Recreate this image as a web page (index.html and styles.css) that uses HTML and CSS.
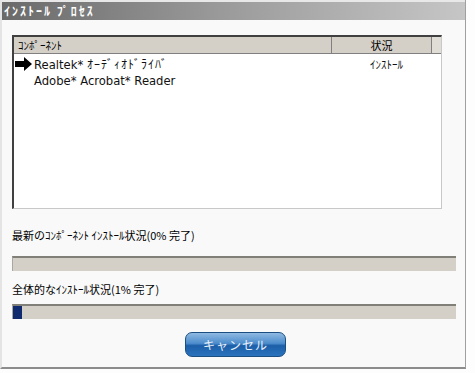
FILE: index.html
```html
<!DOCTYPE html>
<html>
<head>
<meta charset="utf-8">
<link rel="stylesheet" href="styles.css">
</head>
<body>
<div class="win">
  <div class="title">ｲﾝｽﾄｰﾙ ﾌﾟﾛｾｽ</div>
  <div class="content">
    <div class="list">
      <div class="head">
        <div class="hcol1">ｺﾝﾎﾟｰﾈﾝﾄ</div>
        <div class="hcol2">状況</div>
        <div class="hcol3"></div>
      </div>
      <div class="rows">
        <div class="row">
          <svg class="arrow" width="18" height="14" viewBox="0 0 18 14"><path d="M0 4 H9 V0 L17 7 L9 14 V10 H0 Z" fill="#000"/></svg>
          <span class="name">Realtek* <span class="kana">ｵｰﾃﾞｨｵﾄﾞﾗｲﾊﾞ</span></span>
          <span class="stat">ｲﾝｽﾄｰﾙ</span>
        </div>
        <div class="row">
          <span class="arrow-space"></span>
          <span class="name">Adobe* Acrobat* Reader</span>
        </div>
      </div>
    </div>
    <div class="label l1">最新のｺﾝﾎﾟｰﾈﾝﾄ ｲﾝｽﾄｰﾙ状況(0% 完了)</div>
    <div class="bar b1"></div>
    <div class="label l2">全体的なｲﾝｽﾄｰﾙ状況(1% 完了)</div>
    <div class="bar b2"><div class="fill" style="width:9px"></div></div>
    <div class="btnrow"><div class="btn">キャンセル</div></div>
  </div>
</div>
</body>
</html>
```
FILE: styles.css
```css
html, body { margin: 0; padding: 0; background: #fdfdfd; }
body { width: 475px; height: 373px; overflow: hidden; font-family: "Noto Sans CJK JP", "DejaVu Sans", sans-serif; }
.win {
  width: 466px; height: 369px;
  border-right: 1px solid #a0a0a0;
  border-bottom: 2px solid #8c8c8c;
  border-left: 2px solid #e4e4e4;
  box-sizing: border-box;
  background: #f9f9f9;
}
.title {
  height: 20px;
  border-top: 2px solid #e8e8e8;
  box-sizing: border-box;
  background: linear-gradient(to right, #6a6a6a, #989898 45%, #c6c6c6);
  color: #fff;
  font-size: 12px;
  font-weight: bold;
  line-height: 17px;
  padding-left: 2px;
  letter-spacing: 2px;
}
.content { padding: 15px 8px 0 10px; }
.list {
  width: 430px; height: 174px; box-sizing: border-box;
  border-top: 2px solid #404040;
  border-left: 2px solid #404040;
  border-right: 1px solid #c8c8c8;
  border-bottom: 1px solid #c8c8c8;
  background: #fff;
}
.head { display: flex; height: 16px; background: #d4d0c8; font-size: 11px; line-height: 16px; color: #000; border-bottom: 1px solid #808080; }
.hcol1 { width: 318px; padding-left: 4px; border-right: 1px solid #808080; box-sizing: border-box; }
.hcol2 { width: 100px; text-align: center; border-right: 1px solid #808080; box-sizing: border-box; }
.hcol3 { flex: 1; background: #e0ddd6; }
.rows { padding-top: 1px; }
.row { display: flex; align-items: center; height: 17px; font-size: 11.6px; font-family: "DejaVu Sans", "Noto Sans CJK JP", sans-serif; color: #111; }
.arrow { width: 18px; margin-left: 1px; }
.arrow-space { width: 19px; }
.name { width: 336px; padding-left: 1px; }
.kana { font-family: "Noto Sans CJK JP", sans-serif; font-size: 12px; letter-spacing: 1px; }
.stat { font-size: 11px; font-family: "Noto Sans CJK JP", sans-serif; }
.label { font-size: 11px; color: #000; height: 14px; line-height: 14px; padding-left: 0; }
.l1 { margin-top: 19px; }
.l2 { margin-top: 11px; }
.bar {
  width: 444px; height: 15px; box-sizing: border-box;
  background: #d4d0c8;
  border-top: 2px solid #808078;
  border-left: 1px solid #a8a8a0;
}
.b1 { margin-top: 14px; }
.b2 { margin-top: 8px; }
.fill { height: 100%; background: #102a70; }
.btnrow { display: flex; justify-content: center; padding-top: 13px; padding-left: 2px; }
.btn {
  width: 101px; height: 25px; box-sizing: border-box;
  border-radius: 7px;
  border: 1px solid #1d4e82;
  background: linear-gradient(to bottom, #8fb9e2 0%, #4d8dcc 45%, #1c5fa8 55%, #2a73bd 100%);
  color: #e8f0fa;
  font-size: 12px;
  text-align: center;
  line-height: 23px;
  letter-spacing: 1px;
}
```
